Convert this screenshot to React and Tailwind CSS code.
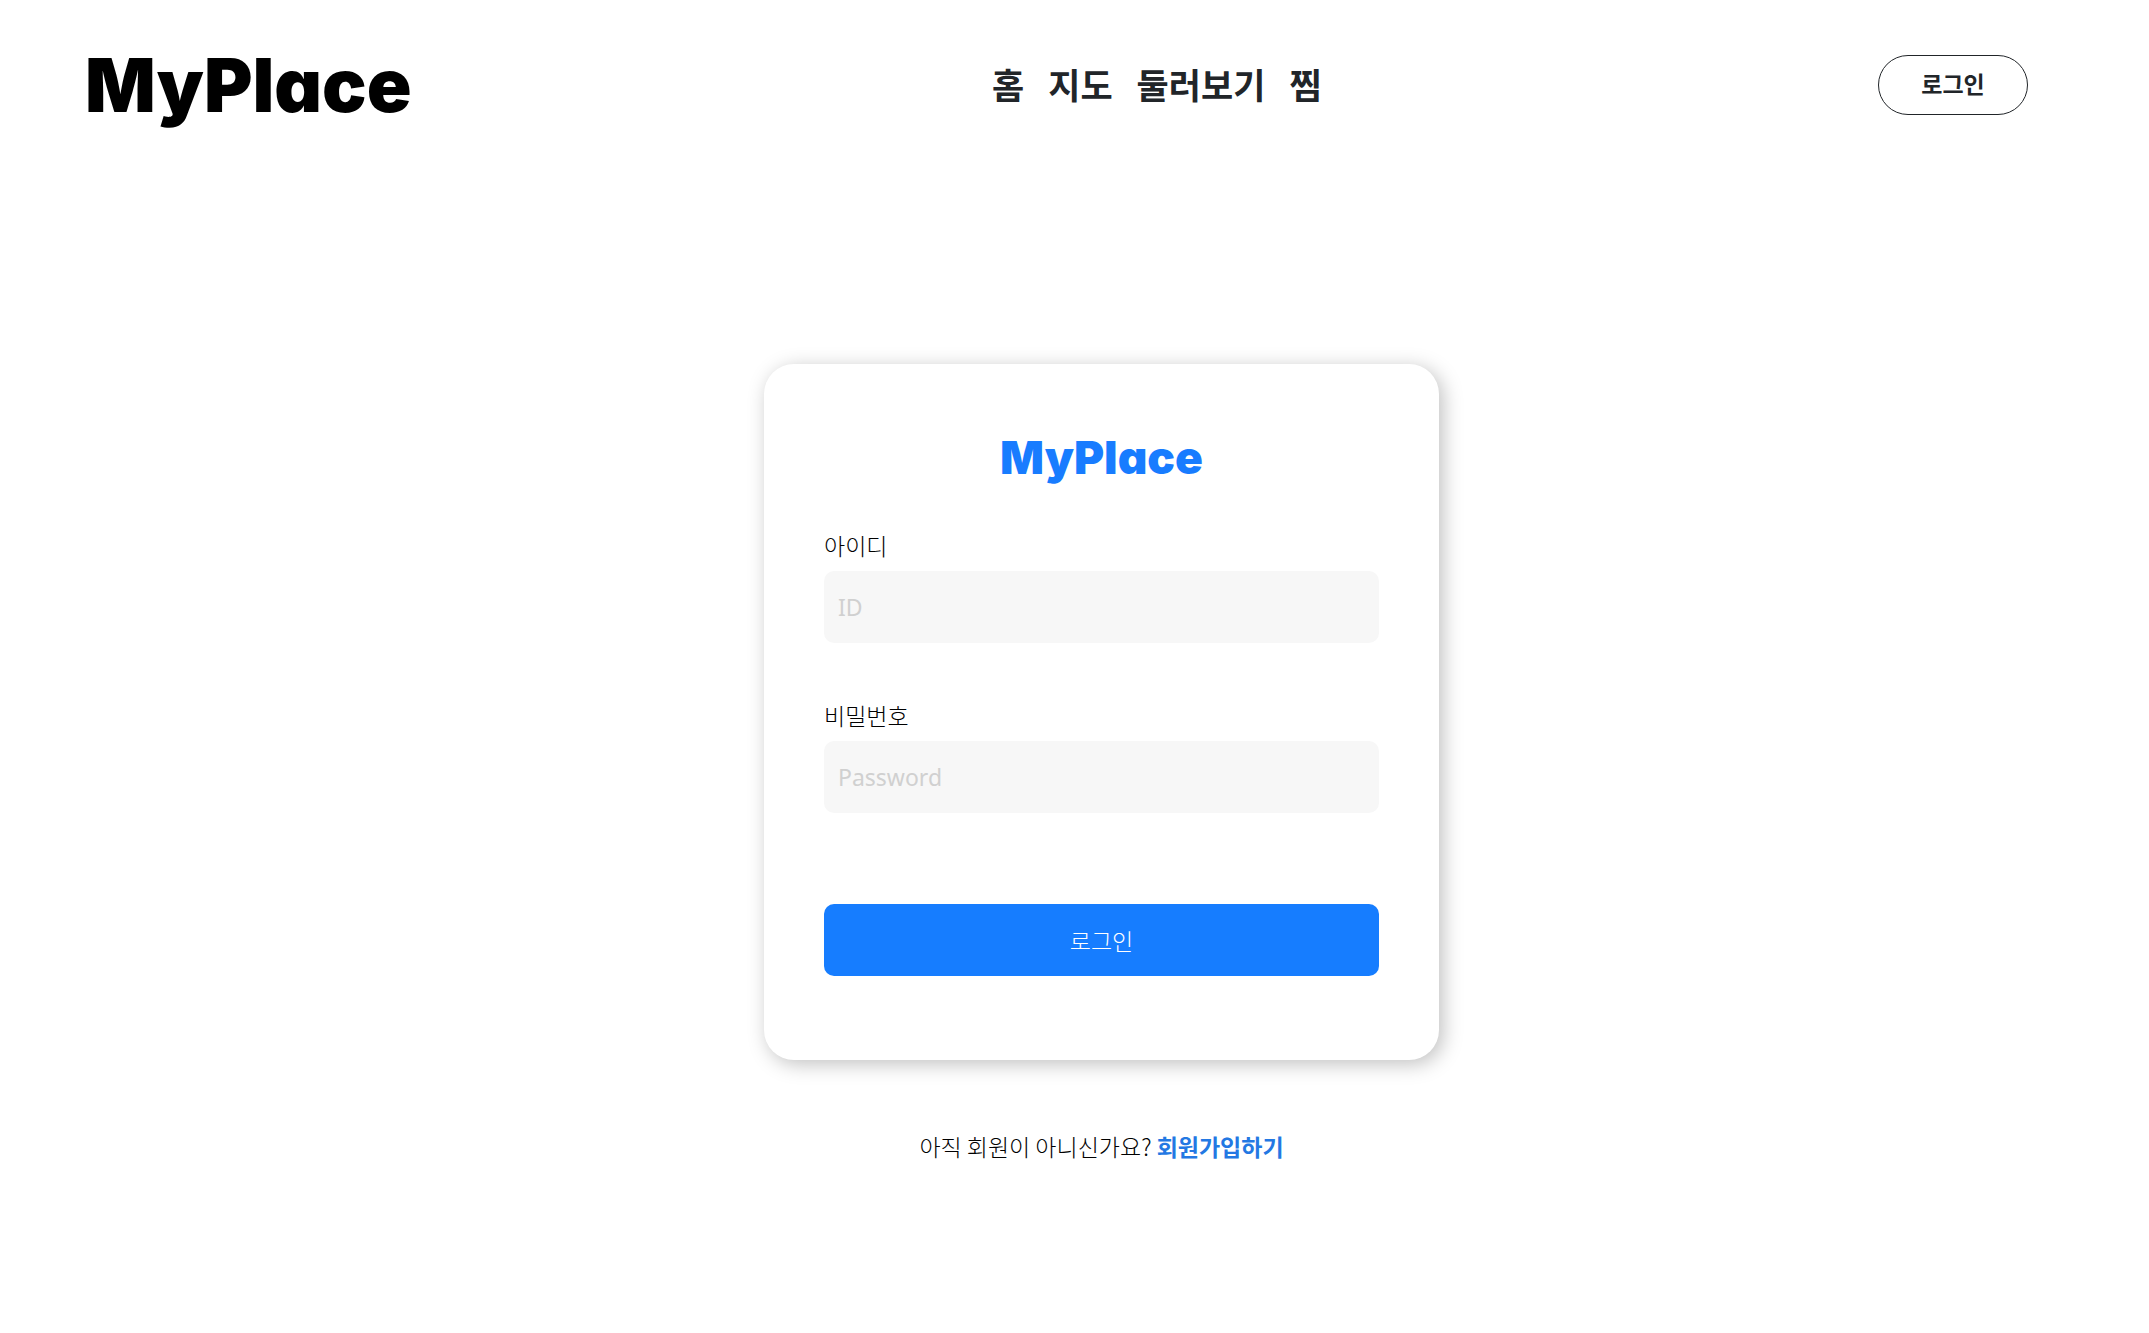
const NAV = ["홈", "지도", "둘러보기", "찜"];

function Field({ id, label, type, placeholder }) {
  return (
    <div className="flex flex-col gap-[10px]">
      <label htmlFor={id} className="text-[23px] leading-8 font-light text-black">
        {label}
      </label>
      <input
        id={id}
        type={type}
        placeholder={placeholder}
        className="h-[72px] w-full rounded-[10px] bg-[#f7f7f7] px-[14px] font-['Noto_Sans','Noto_Sans_CJK_KR',sans-serif] text-[23px] outline-none placeholder:text-[#d0d0d0]"
      />
    </div>
  );
}

export default function App() {
  return (
    <div className="min-h-screen bg-white pb-24 font-['Noto_Sans_CJK_KR',sans-serif] text-[#212529]">
      <header className="flex items-center justify-between pt-8 pr-[121px] pl-[85px]">
        <a
          href="#home"
          className="font-['Inter',sans-serif] text-[74px] leading-[106px] font-black text-black [font-feature-settings:'cv11']"
        >
          MyPlace
        </a>
        <nav className="flex gap-6 pb-[2px] pl-6 text-[35px] leading-[52px] font-bold">
          {NAV.map((item) => (
            <a key={item} href={`#${item}`}>
              {item}
            </a>
          ))}
        </nav>
        <button
          type="button"
          className="h-[60px] w-[150px] rounded-full border border-[#212529] pb-1 text-[23px] font-bold"
        >
          로그인
        </button>
      </header>

      <main className="mt-[226px] flex flex-col items-center pl-[54px]">
        <form
          onSubmit={(e) => e.preventDefault()}
          className="flex w-full max-w-[675px] flex-col rounded-[30px] bg-white px-[60px] pt-[60px] pb-[84px] shadow-[4px_4px_20px_rgba(0,0,0,0.25)]"
        >
          <h1 className="mb-[39px] text-center font-['Inter',sans-serif] text-[46px] leading-[66px] font-black text-[#187cff] [font-feature-settings:'cv11']">
            MyPlace
          </h1>
          <div className="flex flex-col gap-[56px]">
            <Field id="user-id" label="아이디" type="text" placeholder="ID" />
            <Field
              id="user-password"
              label="비밀번호"
              type="password"
              placeholder="Password"
            />
          </div>
          <button
            type="submit"
            className="mt-[91px] h-[72px] w-full rounded-[10px] bg-[#167dff] text-[23px] font-light text-white"
          >
            로그인
          </button>
        </form>

        <p className="mt-[68px] text-[23px] leading-9 font-light text-black">
          아직 회원이 아니신가요?{" "}
          <a href="#signup" className="font-bold text-[#2378e3]">
            회원가입하기
          </a>
        </p>
      </main>
    </div>
  );
}
